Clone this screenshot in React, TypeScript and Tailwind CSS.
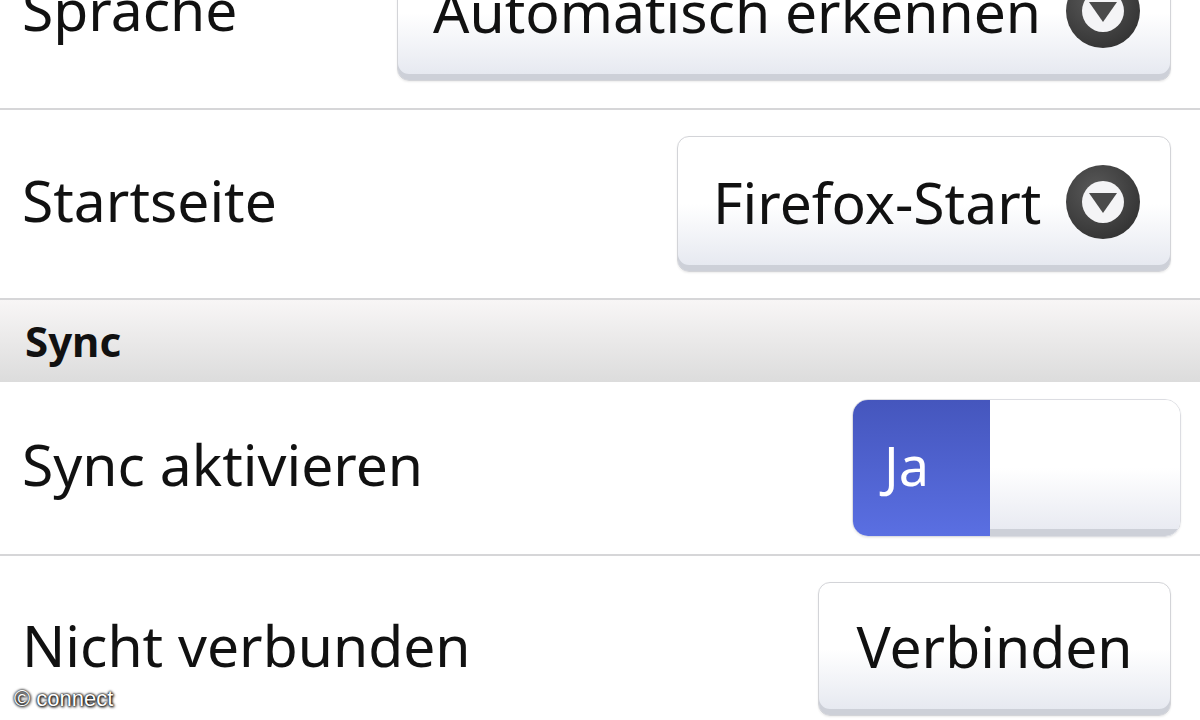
import React from 'react';

/**
 * Android Firefox settings screen (Sprache / Startseite / Sync)
 */

function DropIcon() {
  return (
    <svg width="76" height="76" viewBox="0 0 76 76" className="shrink-0">
      <defs>
        <radialGradient id="ring" cx="40%" cy="35%" r="70%">
          <stop offset="0%" stopColor="#5a5a5a" />
          <stop offset="100%" stopColor="#333333" />
        </radialGradient>
      </defs>
      <circle cx="38" cy="38" r="37" fill="url(#ring)" />
      <circle cx="38" cy="38" r="21" fill="#f4f4f6" />
      <path d="M24 29 L52 29 L38 49 Z" fill="#4a4a4a" />
    </svg>
  );
}

function Select({ label, width }: { label: string; width: string }) {
  return (
    <div
      className={`${width} h-[136px] flex items-center justify-between pl-[35px] pr-[29px] pb-[4px] rounded-[12px] border border-[#d3d4d8] bg-gradient-to-b from-white via-white to-[#e4e7ef] shadow-[inset_0_-6px_0_#cdd0d8,0_1px_2px_rgba(0,0,0,0.08)]`}
    >
      <span className="text-[57px] leading-none whitespace-nowrap text-[#111]">{label}</span>
      <DropIcon />
    </div>
  );
}

function Row({
  label,
  height,
  children,
  border = true,
}: {
  label: string;
  height: string;
  children: React.ReactNode;
  border?: boolean;
}) {
  return (
    <div
      className={`${height} flex items-center justify-between pl-[22px] pr-[29px] ${
        border ? 'border-b-2 border-[#d6d6d8]' : ''
      }`}
    >
      <span className="mb-[8px] text-[57px] leading-none whitespace-nowrap text-[#111]">{label}</span>
      {children}
    </div>
  );
}

export default function App() {
  return (
    <div className="relative w-[1200px] h-[720px] overflow-hidden bg-white font-['Noto_Sans','Open_Sans',sans-serif]">
      <div className="-mt-[82px]">
        {/* Sprache */}
        <Row label="Sprache" height="h-[192px]">
          <Select label="Automatisch erkennen" width="w-[774px]" />
        </Row>

        {/* Startseite */}
        <Row label="Startseite" height="h-[190px]">
          <Select label="Firefox-Start" width="w-[494px]" />
        </Row>

        {/* Section header */}
        <div className="h-[82px] flex items-center pl-[25px] bg-gradient-to-b from-[#f8f6f6] to-[#dcdcdc]">
          <span className="text-[42px] font-bold leading-none text-[#111]">Sync</span>
        </div>

        {/* Sync toggle */}
        <div className="h-[174px] flex items-center justify-between pl-[22px] pr-[19px] border-b-2 border-[#d6d6d8]">
          <span className="mb-[8px] text-[57px] leading-none whitespace-nowrap text-[#111]">Sync aktivieren</span>
          <div className="w-[329px] h-[138px] flex rounded-[16px] border border-[#dcdde2] overflow-hidden shadow-[0_1px_2px_rgba(0,0,0,0.08)]">
            <div className="w-[137px] h-full flex items-center pl-[31px] pb-[6px] bg-gradient-to-b from-[#4556bd] to-[#5a6fe2]">
              <span className="text-[54px] leading-none text-white">Ja</span>
            </div>
            <div className="flex-1 h-full bg-gradient-to-b from-white via-white to-[#e6e8f0] shadow-[inset_0_-7px_0_#cdd0d8]" />
          </div>
        </div>

        {/* Connect */}
        <Row label="Nicht verbunden" height="h-[186px]" border={false}>
          <div className="w-[353px] h-[134px] flex items-center justify-center pb-[6px] rounded-[12px] border border-[#d3d4d8] bg-gradient-to-b from-white via-white to-[#e4e7ef] shadow-[inset_0_-6px_0_#cdd0d8,0_1px_2px_rgba(0,0,0,0.08)]">
            <span className="text-[57px] leading-none text-[#111]">Verbinden</span>
          </div>
        </Row>
      </div>

      {/* Watermark */}
      <div className="absolute left-[14px] top-[688px] text-[22px] leading-none text-white font-['Liberation_Sans',sans-serif] [text-shadow:0_0_3px_#000,0_0_2px_#000,1px_1px_3px_#000]">
        © connect
      </div>
    </div>
  );
}
